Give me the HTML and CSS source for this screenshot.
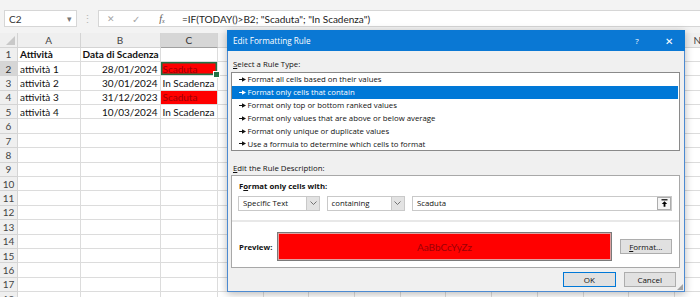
FILE: index.html
```html
<!DOCTYPE html>
<html>
<head>
<meta charset="utf-8">
<link rel="stylesheet" href="styles.css">
</head>
<body>
<div class="app">
  <div class="topbar">
    <div class="namebox"><span>C2</span><span class="nb-arrow">▾</span></div>
    <div class="vdots">⋮</div>
    <div class="fbar">
      <span class="fb-icon x">✕</span>
      <span class="fb-icon ok">✓</span>
      <span class="fb-icon fx">f<sub>x</sub></span>
      <span class="ftext">=IF(TODAY()&gt;B2; "Scaduta"; "In Scadenza")</span>
    </div>
  </div>

  <div class="sheet">
    <div class="row hrow">
      <div class="hd corner"><span class="tri"></span></div>
      <div class="hd">A</div><div class="hd">B</div><div class="hd sel">C</div>
      <div class="hd">D</div><div class="hd">E</div><div class="hd">F</div><div class="hd">G</div><div class="hd">H</div>
      <div class="hd">I</div><div class="hd">J</div><div class="hd">K</div><div class="hd">L</div><div class="hd">M</div>
      <div class="hd">N</div>
    </div>
    <div class="row">
      <div class="hd">1</div><div class="c b">Attività</div><div class="c b">Data di Scadenza</div><div class="c"></div>
      <div class="c"></div><div class="c"></div><div class="c"></div><div class="c"></div><div class="c"></div>
      <div class="c"></div><div class="c"></div><div class="c"></div><div class="c"></div><div class="c"></div>
      <div class="c"></div>
    </div>
    <div class="row">
      <div class="hd sel">2</div><div class="c">attività 1</div><div class="c r">28/01/2024</div><div class="c red active">Scaduta</div>
      <div class="c"></div><div class="c"></div><div class="c"></div><div class="c"></div><div class="c"></div>
      <div class="c"></div><div class="c"></div><div class="c"></div><div class="c"></div><div class="c"></div>
      <div class="c"></div>
    </div>
    <div class="row">
      <div class="hd">3</div><div class="c">attività 2</div><div class="c r">30/01/2024</div><div class="c">In Scadenza</div>
      <div class="c"></div><div class="c"></div><div class="c"></div><div class="c"></div><div class="c"></div>
      <div class="c"></div><div class="c"></div><div class="c"></div><div class="c"></div><div class="c"></div>
      <div class="c"></div>
    </div>
    <div class="row">
      <div class="hd">4</div><div class="c">attività 3</div><div class="c r">31/12/2023</div><div class="c red">Scaduta</div>
      <div class="c"></div><div class="c"></div><div class="c"></div><div class="c"></div><div class="c"></div>
      <div class="c"></div><div class="c"></div><div class="c"></div><div class="c"></div><div class="c"></div>
      <div class="c"></div>
    </div>
    <div class="row">
      <div class="hd">5</div><div class="c">attività 4</div><div class="c r">10/03/2024</div><div class="c">In Scadenza</div>
      <div class="c"></div><div class="c"></div><div class="c"></div><div class="c"></div><div class="c"></div>
      <div class="c"></div><div class="c"></div><div class="c"></div><div class="c"></div><div class="c"></div>
      <div class="c"></div>
    </div>
    <div class="row"><div class="hd">6</div><div class="c"></div><div class="c"></div><div class="c"></div><div class="c"></div><div class="c"></div><div class="c"></div><div class="c"></div><div class="c"></div><div class="c"></div><div class="c"></div><div class="c"></div><div class="c"></div><div class="c"></div><div class="c"></div></div>
    <div class="row"><div class="hd">7</div><div class="c"></div><div class="c"></div><div class="c"></div><div class="c"></div><div class="c"></div><div class="c"></div><div class="c"></div><div class="c"></div><div class="c"></div><div class="c"></div><div class="c"></div><div class="c"></div><div class="c"></div><div class="c"></div></div>
    <div class="row"><div class="hd">8</div><div class="c"></div><div class="c"></div><div class="c"></div><div class="c"></div><div class="c"></div><div class="c"></div><div class="c"></div><div class="c"></div><div class="c"></div><div class="c"></div><div class="c"></div><div class="c"></div><div class="c"></div><div class="c"></div></div>
    <div class="row"><div class="hd">9</div><div class="c"></div><div class="c"></div><div class="c"></div><div class="c"></div><div class="c"></div><div class="c"></div><div class="c"></div><div class="c"></div><div class="c"></div><div class="c"></div><div class="c"></div><div class="c"></div><div class="c"></div><div class="c"></div></div>
    <div class="row"><div class="hd">10</div><div class="c"></div><div class="c"></div><div class="c"></div><div class="c"></div><div class="c"></div><div class="c"></div><div class="c"></div><div class="c"></div><div class="c"></div><div class="c"></div><div class="c"></div><div class="c"></div><div class="c"></div><div class="c"></div></div>
    <div class="row"><div class="hd">11</div><div class="c"></div><div class="c"></div><div class="c"></div><div class="c"></div><div class="c"></div><div class="c"></div><div class="c"></div><div class="c"></div><div class="c"></div><div class="c"></div><div class="c"></div><div class="c"></div><div class="c"></div><div class="c"></div></div>
    <div class="row"><div class="hd">12</div><div class="c"></div><div class="c"></div><div class="c"></div><div class="c"></div><div class="c"></div><div class="c"></div><div class="c"></div><div class="c"></div><div class="c"></div><div class="c"></div><div class="c"></div><div class="c"></div><div class="c"></div><div class="c"></div></div>
    <div class="row"><div class="hd">13</div><div class="c"></div><div class="c"></div><div class="c"></div><div class="c"></div><div class="c"></div><div class="c"></div><div class="c"></div><div class="c"></div><div class="c"></div><div class="c"></div><div class="c"></div><div class="c"></div><div class="c"></div><div class="c"></div></div>
    <div class="row"><div class="hd">14</div><div class="c"></div><div class="c"></div><div class="c"></div><div class="c"></div><div class="c"></div><div class="c"></div><div class="c"></div><div class="c"></div><div class="c"></div><div class="c"></div><div class="c"></div><div class="c"></div><div class="c"></div><div class="c"></div></div>
    <div class="row"><div class="hd">15</div><div class="c"></div><div class="c"></div><div class="c"></div><div class="c"></div><div class="c"></div><div class="c"></div><div class="c"></div><div class="c"></div><div class="c"></div><div class="c"></div><div class="c"></div><div class="c"></div><div class="c"></div><div class="c"></div></div>
    <div class="row"><div class="hd">16</div><div class="c"></div><div class="c"></div><div class="c"></div><div class="c"></div><div class="c"></div><div class="c"></div><div class="c"></div><div class="c"></div><div class="c"></div><div class="c"></div><div class="c"></div><div class="c"></div><div class="c"></div><div class="c"></div></div>
    <div class="row"><div class="hd">17</div><div class="c"></div><div class="c"></div><div class="c"></div><div class="c"></div><div class="c"></div><div class="c"></div><div class="c"></div><div class="c"></div><div class="c"></div><div class="c"></div><div class="c"></div><div class="c"></div><div class="c"></div><div class="c"></div></div>
    <div class="row"><div class="hd">18</div><div class="c"></div><div class="c"></div><div class="c"></div><div class="c"></div><div class="c"></div><div class="c"></div><div class="c"></div><div class="c"></div><div class="c"></div><div class="c"></div><div class="c"></div><div class="c"></div><div class="c"></div><div class="c"></div></div>
  </div>

  <div class="dialog">
    <div class="titlebar">
      <span class="title">Edit Formatting Rule</span>
      <span class="tb-help">?</span>
      <span class="tb-close">✕</span>
    </div>
    <div class="dbody">
      <div class="lbl"><u>S</u>elect a Rule Type:</div>
      <div class="listbox">
        <div class="item"><svg class="arr" width="7" height="5" viewBox="0 0 7 5"><path d="M0 2.5H4" stroke="currentColor" stroke-width="1"/><path d="M3 0.3L7 2.5L3 4.7Z" fill="currentColor"/></svg>Format all cells based on their values</div>
        <div class="item on"><svg class="arr" width="7" height="5" viewBox="0 0 7 5"><path d="M0 2.5H4" stroke="currentColor" stroke-width="1"/><path d="M3 0.3L7 2.5L3 4.7Z" fill="currentColor"/></svg>Format only cells that contain</div>
        <div class="item"><svg class="arr" width="7" height="5" viewBox="0 0 7 5"><path d="M0 2.5H4" stroke="currentColor" stroke-width="1"/><path d="M3 0.3L7 2.5L3 4.7Z" fill="currentColor"/></svg>Format only top or bottom ranked values</div>
        <div class="item"><svg class="arr" width="7" height="5" viewBox="0 0 7 5"><path d="M0 2.5H4" stroke="currentColor" stroke-width="1"/><path d="M3 0.3L7 2.5L3 4.7Z" fill="currentColor"/></svg>Format only values that are above or below average</div>
        <div class="item"><svg class="arr" width="7" height="5" viewBox="0 0 7 5"><path d="M0 2.5H4" stroke="currentColor" stroke-width="1"/><path d="M3 0.3L7 2.5L3 4.7Z" fill="currentColor"/></svg>Format only unique or duplicate values</div>
        <div class="item"><svg class="arr" width="7" height="5" viewBox="0 0 7 5"><path d="M0 2.5H4" stroke="currentColor" stroke-width="1"/><path d="M3 0.3L7 2.5L3 4.7Z" fill="currentColor"/></svg>Use a formula to determine which cells to format</div>
      </div>
      <div class="lbl lbl2"><u>E</u>dit the Rule Description:</div>
      <div class="panel">
        <div class="ptop">
          <div class="bold">F<u>o</u>rmat only cells with:</div>
          <div class="controls">
            <div class="combo c1"><span class="ctext">Specific Text</span><span class="dd"><svg width="7" height="4" viewBox="0 0 7 4"><path d="M0.5 0.5L3.5 3.5L6.5 0.5" fill="none" stroke="#666" stroke-width="0.9"/></svg></span></div>
            <div class="combo c2"><span class="ctext">containing</span><span class="dd"><svg width="7" height="4" viewBox="0 0 7 4"><path d="M0.5 0.5L3.5 3.5L6.5 0.5" fill="none" stroke="#666" stroke-width="0.9"/></svg></span></div>
            <div class="combo c3"><span class="ctext">Scaduta</span><span class="up"><svg width="7" height="8" viewBox="0 0 7 8"><path d="M0.5 0.8H6.5" stroke="#000" stroke-width="1.2"/><path d="M3.5 2.2L0.8 5H2.6V7.8H4.4V5H6.2Z" fill="#000"/></svg></span></div>
          </div>
        </div>
        <div class="pbot">
          <span class="bold plabel">Preview:</span>
          <div class="preview"><span>AaBbCcYyZz</span></div>
          <div class="btn fmt"><u>F</u>ormat...</div>
        </div>
      </div>
      <div class="actions">
        <div class="btn okb">OK</div>
        <div class="btn">Cancel</div>
      </div>
    </div>
    <div class="grip"></div>
  </div>
</div>
</body>
</html>
```

FILE: styles.css
```css
* { box-sizing: border-box; }
html, body { margin: 0; padding: 0; }
body {
  width: 700px;
  height: 297px;
  overflow: hidden;
  background: #ffffff;
  font-family: Lato, "Liberation Sans", sans-serif;
  color: #1e1e1e;
}
.app { position: relative; width: 700px; height: 297px; overflow: hidden; }

/* formula bar */
.topbar {
  height: 33px;
  background: #f3f3f3;
  display: flex;
  align-items: flex-start;
  padding: 10px 0 0 4px;
}
.namebox {
  width: 73px;
  height: 17px;
  background: #fff;
  border: 1px solid #d6d6d6;
  display: flex;
  align-items: center;
  justify-content: space-between;
  padding: 0 4px 0 4px;
  font-size: 10px;
  color: #333;
}
.nb-arrow { font-size: 9px; color: #777; }
.vdots {
  width: 21px;
  height: 17px;
  text-align: center;
  color: #b8b8b8;
  font-size: 11px;
  line-height: 17px;
}
.fbar {
  flex: 1;
  height: 17px;
  background: #fff;
  border: 1px solid #d6d6d6;
  border-right: none;
  display: flex;
  align-items: center;
  font-size: 10px;
}
.fb-icon { color: #a6a6a6; text-align: center; }
.fb-icon.x { width: 12px; margin-left: 6px; font-size: 9px; }
.fb-icon.ok { width: 12px; margin-left: 13px; font-size: 10px; }
.fb-icon.fx { width: 12px; margin-left: 14px; font-family: "Liberation Serif", serif; font-style: italic; color: #555; font-size: 10px; }
.fb-icon.fx sub { font-size: 6px; vertical-align: -1px; }
.ftext { margin-left: 14px; color: #222; font-size: 10px; }

/* sheet */
.sheet {
  display: flex;
  flex-direction: column;
  font-size: 10px;
}
.row {
  display: flex;
  height: 14.4px;
  flex: none;
}
.row.hrow { height: 14.5px; }
.row > * { width: 45.7px; flex: none; }
.row > :nth-child(1) { width: 18px; }
.row > :nth-child(2) { width: 62.5px; }
.row > :nth-child(3) { width: 80px; }
.row > :nth-child(4) { width: 57.5px; }
.hd {
  background: #efefef;
  color: #444;
  border-right: 1px solid #d4d4d4;
  border-bottom: 1px solid #d4d4d4;
  display: flex;
  align-items: center;
  justify-content: center;
  font-size: 10px;
}
.hd.sel { background: #d6d6d6; color: #333; }
.hrow .hd.sel { border-bottom: 1px solid #a0a0a0; }
.corner { position: relative; }
.tri {
  position: absolute;
  right: 2px;
  bottom: 2px;
  width: 0; height: 0;
  border-left: 9px solid transparent;
  border-bottom: 9px solid #c8c8c8;
}
.c {
  border-right: 1px solid #dcdcdc;
  border-bottom: 1px solid #dcdcdc;
  display: flex;
  align-items: center;
  padding: 0 2px;
  white-space: nowrap;
  font-size: 10px;
  color: #111;
}
.c.b { font-weight: 700; }
.c.r { justify-content: flex-end; }
.c.red { background: #ff0000; color: #9c0006; }
.c.active {
  position: relative;
  box-shadow: inset 0 0 0 1.5px #217346;
}
.c.active::after {
  content: "";
  position: absolute;
  right: -3px;
  bottom: -3px;
  width: 5px;
  height: 5px;
  background: #217346;
  border: 1px solid #fff;
}

/* dialog */
.dialog {
  position: absolute;
  left: 227px;
  top: 30px;
  width: 458px;
  height: 262px;
  background: #f0f0f0;
  border: 1px solid #4c8ad1;
  border-top: none;
  box-shadow: 0 2px 8px rgba(0,0,0,0.28);
  font-family: "Open Sans", "Noto Sans", sans-serif;
  font-size: 7.8px;
  color: #111;
}
.titlebar {
  height: 21px;
  margin: 0 -1px;
  background: #0a78d4;
  color: #fff;
  display: flex;
  align-items: center;
  padding-left: 6px;
  font-size: 8.2px;
}
.title { flex: 1; }
.tb-help { width: 14px; text-align: center; font-size: 8px; margin-right: 18px; }
.tb-close { width: 14px; text-align: center; font-size: 10px; margin-right: 9px; }
.dbody { padding: 7px 4px 0 3px; }
.lbl { height: 12px; line-height: 12px; padding-left: 2px; margin-bottom: 2px; }
.lbl2 { margin-top: 11px; margin-bottom: 1px; }
.listbox {
  height: 79px;
  background: #fff;
  border: 1px solid #8a8a8a;
  padding: 0 1px 0 0;
}
.item {
  height: 12.9px;
  display: flex;
  align-items: center;
  padding-left: 7px;
  white-space: nowrap;
}
.item .arr { margin-right: 1.5px; flex: none; }
.item.on { background: #0078d7; color: #fff; }

.panel {
  height: 93px;
  border: 1px solid #a8a8a8;
  background: #fff;
  display: flex;
  flex-direction: column;
}
.ptop {
  height: 46px;
  padding: 4px 6px 0 6px;
  border-bottom: 2px solid #e8e8e8;
}
.bold { font-weight: 700; }
.ptop .bold { height: 12px; line-height: 12px; padding-left: 1px; }
.controls {
  display: flex;
  margin-top: 4px;
  height: 14.5px;
}
.combo {
  height: 14.5px;
  background: #fff;
  border: 1px solid #c9c9c9;
  display: flex;
  align-items: center;
}
.ctext { flex: 1; padding-left: 4px; white-space: nowrap; }
.c1 { width: 82px; }
.c2 { width: 78px; margin-left: 6.5px; }
.c3 { width: 260px; margin-left: 7.5px; }
.dd {
  width: 13px;
  height: 12.5px;
  background: #e3e3e3;
  border-left: 1px solid #c9c9c9;
  display: flex;
  align-items: center;
  justify-content: center;
}
.up {
  width: 14px;
  height: 12.5px;
  background: #f4f4f4;
  border: 1px solid #adadad;
  display: flex;
  align-items: center;
  justify-content: center;
}
.pbot {
  flex: 1;
  display: flex;
  align-items: center;
  padding: 7px 6px 3px 7px;
}
.plabel { width: 38px; }
.preview {
  width: 335px;
  height: 28.5px;
  background: #ff0000;
  border: 1px solid #7a7a7a;
  box-shadow: inset 0 0 0 1px #e0a0a0;
  display: flex;
  align-items: center;
  justify-content: center;
  color: #9c0006;
  font-family: Lato, "Liberation Sans", sans-serif;
  font-size: 10px;
}
.btn {
  width: 52.5px;
  height: 15px;
  background: #e1e1e1;
  border: 1px solid #adadad;
  display: flex;
  align-items: center;
  justify-content: center;
  font-size: 8px;
  color: #111;
}
.fmt { margin-left: 7.5px; }
.actions {
  display: flex;
  justify-content: flex-end;
  gap: 8px;
  padding-right: 4px;
  margin-top: 3.5px;
}
.okb { border: 1.5px solid #0078d7; }
.grip {
  position: absolute;
  right: 1px;
  bottom: 1px;
  width: 6px;
  height: 6px;
  background:
    radial-gradient(circle, #a0a0a0 0.7px, transparent 0.9px) 0 0 / 2px 2px;
  clip-path: polygon(100% 0, 100% 100%, 0 100%);
}
```
